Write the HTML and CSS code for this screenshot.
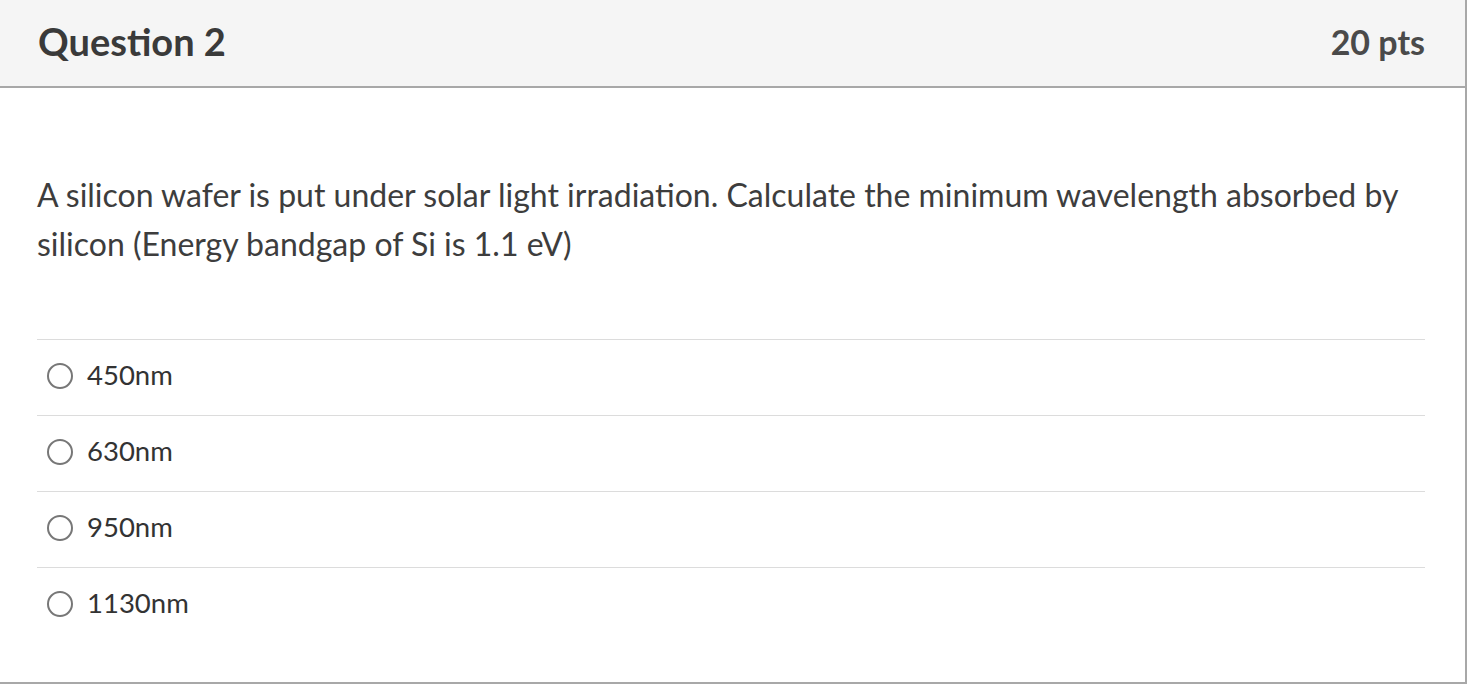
FILE: index.html
```html
<!DOCTYPE html>
<html lang="en">
<head>
<meta charset="utf-8">
<title>Question 2</title>
<link rel="stylesheet" href="styles.css">
</head>
<body>
<div class="question">
  <div class="header">
    <span class="title">Question 2</span>
    <span class="points">20 pts</span>
  </div>
  <div class="content">
    <p class="text">A silicon wafer is put under solar light irradiation. Calculate the minimum wavelength absorbed by silicon (Energy bandgap of Si is 1.1 eV)</p>
    <div class="answers">
      <label class="answer"><span class="radio"></span><span class="label">450nm</span></label>
      <label class="answer"><span class="radio"></span><span class="label">630nm</span></label>
      <label class="answer"><span class="radio"></span><span class="label">950nm</span></label>
      <label class="answer"><span class="radio"></span><span class="label">1130nm</span></label>
    </div>
  </div>
</div>
</body>
</html>
```
FILE: styles.css
```css
* { box-sizing: border-box; }
html, body { margin: 0; padding: 0; background: #fff; }
body { font-family: Lato, "Noto Sans", sans-serif; color: #3a3a3a; }

.question {
  width: 1467px;
  height: 684px;
  border-right: 2px solid #a8a8a8;
  border-bottom: 2px solid #a8a8a8;
  display: flex;
  flex-direction: column;
}

.header {
  height: 88px;
  background: #f5f5f5;
  border-bottom: 2px solid #a8a8a8;
  display: flex;
  align-items: center;
  justify-content: space-between;
  padding: 0 40px 4px 38px;
}
.title { font-size: 38px; font-weight: 700; color: #3a3a3a; }
.points { font-size: 34px; font-weight: 700; color: #4a4a4a; }

.content { padding: 0 40px 0 37px; }
.text {
  margin: 0;
  padding-top: 82px;
  font-size: 32px;
  line-height: 49px;
  color: #3d3d3d;
}
.answers { margin-top: 71px; }
.answer {
  display: flex;
  align-items: center;
  height: 76px;
  border-top: 1px solid #dcdcdc;
  padding-left: 10px;
  padding-bottom: 3px;
}
.radio {
  width: 26px;
  height: 26px;
  border: 2px solid #777;
  border-radius: 50%;
  flex: none;
}
.label { margin-left: 14px; margin-bottom: 4px; font-size: 27.5px; color: #333; }
```
